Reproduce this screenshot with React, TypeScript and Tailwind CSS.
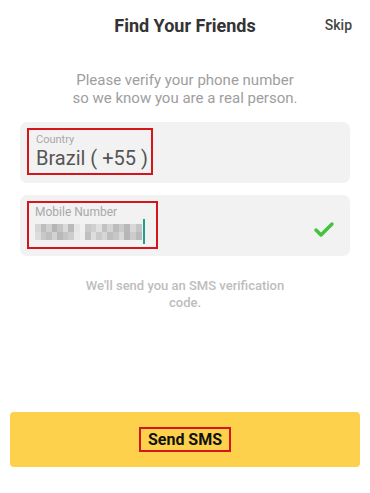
import { Check } from "lucide-react";

// pixelated blur of the phone number: two rows of grey blocks
const blurTop = [
  "w-[6px] bg-[#d6d6d6]", "w-[5px] bg-[#bdbdbd]", "w-[6px] bg-[#cfcfcf]", "w-[5px] bg-[#b5b5b5]",
  "w-[6px] bg-[#c4c4c4]", "w-[5px] bg-[#dadada]", "w-[6px] bg-[#bababa]", "w-[6px] bg-[#e6e6e6]",
  "w-[5px] bg-[#f0f0f0]", "w-[6px] bg-[#c9c9c9]", "w-[5px] bg-[#d0d0d0]", "w-[6px] bg-[#e0e0e0]",
  "w-[5px] bg-[#c2c2c2]", "w-[6px] bg-[#d4d4d4]", "w-[6px] bg-[#bcbcbc]", "w-[5px] bg-[#cbcbcb]",
  "w-[6px] bg-[#b8b8b8]", "w-[6px] bg-[#d8d8d8]", "w-[6px] bg-[#c6c6c6]",
];
const blurBottom = [
  "w-[6px] bg-[#dcdcdc]", "w-[5px] bg-[#c8c8c8]", "w-[6px] bg-[#bfbfbf]", "w-[5px] bg-[#d2d2d2]",
  "w-[6px] bg-[#b9b9b9]", "w-[5px] bg-[#c5c5c5]", "w-[6px] bg-[#cdcdcd]", "w-[6px] bg-[#e8e8e8]",
  "w-[5px] bg-[#eeeeee]", "w-[6px] bg-[#c0c0c0]", "w-[5px] bg-[#dddddd]", "w-[6px] bg-[#cacaca]",
  "w-[5px] bg-[#d6d6d6]", "w-[6px] bg-[#bebebe]", "w-[6px] bg-[#c7c7c7]", "w-[5px] bg-[#d9d9d9]",
  "w-[6px] bg-[#b6b6b6]", "w-[6px] bg-[#cccccc]", "w-[6px] bg-[#bbbbbb]",
];

export default function App() {
  return (
    <div className="flex min-h-[493px] w-[370px] flex-col bg-white font-['Roboto',sans-serif]">
      <header className="grid h-[50px] grid-cols-[1fr_auto_1fr] items-center">
        <div />
        <h1 className="text-[18px] font-bold leading-[21px] text-[#333333]">Find Your Friends</h1>
        <button type="button" className="justify-self-end pr-[18px] text-[14px] font-medium text-[#454545]">
          Skip
        </button>
      </header>

      <p className="mt-[21px] text-center text-[15px] leading-[18px] text-[#9e9e9e]">
        Please verify your phone number
        <br />
        so we know you are a real person.
      </p>

      <div className="mx-[20px] mt-[15px] h-[61px] rounded-[7px] bg-[#f2f2f2] pl-[7px] pt-[6px]">
        <div className="w-[126px] border-2 border-[#d4161c] pl-[7px] pt-[3px] pb-[3px]">
          <div className="text-[11px] leading-[13px] text-[#a8a8a8]">Country</div>
          <div className="whitespace-nowrap text-[20px] leading-[24px] text-[#555555]">Brazil ( +55 )</div>
        </div>
      </div>

      <div className="mx-[20px] mt-[12px] flex h-[61px] items-start rounded-[7px] bg-[#f2f2f2] pl-[7px] pt-[6px]">
        <div className="w-[131px] border-2 border-[#d4161c] px-[6px] pt-[2px] pb-[3px]">
          <div className="text-[12px] leading-[14px] text-[#a8a8a8]">Mobile Number</div>
          <div className="flex items-center">
            <div className="flex flex-col">
              <div className="flex h-[8px]">
                {blurTop.map((c, i) => (
                  <div key={`t-${i}`} className={c} />
                ))}
              </div>
              <div className="flex h-[8px]">
                {blurBottom.map((c, i) => (
                  <div key={`b-${i}`} className={c} />
                ))}
              </div>
            </div>
            <div className="ml-[1px] h-[25px] w-[2px] bg-[#1f9e8a]" />
          </div>
        </div>
        <Check className="ml-auto mr-[14px] mt-[17px] h-[24px] w-[24px] text-[#43c43b]" strokeWidth={3.5} />
      </div>

      <p className="mt-[21px] text-center text-[13px] font-medium leading-[17px] text-[#bdbdbd]">
        We'll send you an SMS verification
        <br />
        code.
      </p>

      <div className="mt-auto px-[10px] pb-[26px]">
        <button
          type="button"
          className="flex h-[55px] w-full items-center justify-center rounded-[4px] bg-[#fdd14b]"
        >
          <span className="border-2 border-[#d4161c] px-[7px] text-[16px] font-bold leading-[21px] text-[#111111]">
            Send SMS
          </span>
        </button>
      </div>
    </div>
  );
}
